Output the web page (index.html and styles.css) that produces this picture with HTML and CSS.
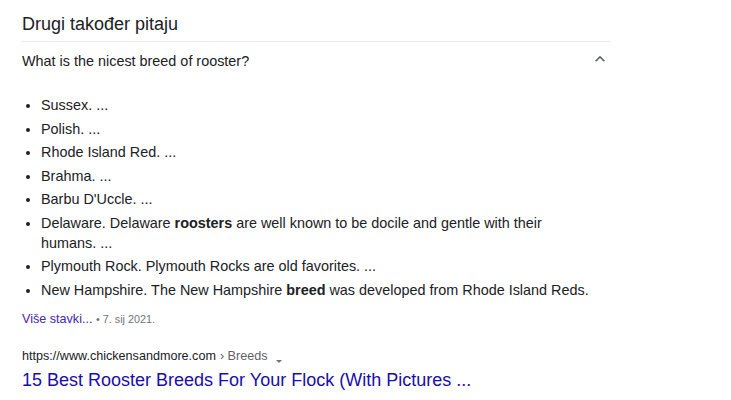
FILE: index.html
```html
<!DOCTYPE html>
<html>
<head>
<meta charset="utf-8">
<link rel="stylesheet" href="styles.css">
</head>
<body>
<div class="wrap">
  <h2 class="heading">Drugi također pitaju</h2>
  <div class="question">
    <span>What is the nicest breed of rooster?</span>
    <svg class="chev" width="20" height="20" viewBox="0 0 24 24"><path d="M7.41 15.41L12 10.83l4.59 4.58L18 14l-6-6-6 6z" fill="#5f6368"/></svg>
  </div>
  <ul class="list">
    <li>Sussex. ...</li>
    <li>Polish. ...</li>
    <li>Rhode Island Red. ...</li>
    <li>Brahma. ...</li>
    <li>Barbu D'Uccle. ...</li>
    <li>Delaware. Delaware <b>roosters</b> are well known to be docile and gentle with their humans. ...</li>
    <li>Plymouth Rock. Plymouth Rocks are old favorites. ...</li>
    <li>New Hampshire. The New Hampshire <b>breed</b> was developed from Rhode Island Reds.</li>
  </ul>
  <div class="more"><a class="more-link">Više stavki...</a> <span class="date">• 7. sij 2021.</span></div>
  <div class="cite">https://www.chickensandmore.com<span class="crumb">› Breeds</span><span class="tri"></span></div>
  <a class="title">15 Best Rooster Breeds For Your Flock (With Pictures ...</a>
</div>
</body>
</html>
```
FILE: styles.css
```css
html, body { margin: 0; padding: 0; background: #fff; }
body { font-family: "Liberation Sans", Arial, sans-serif; color: #202124; }
.wrap { padding-left: 22px; width: 588px; }
.heading {
  margin: 0; padding-top: 12px; padding-bottom: 5px;
  font-size: 18px; font-weight: normal; line-height: 24px;
  border-bottom: 1px solid #ebebeb;
}
.question {
  display: flex; align-items: center; justify-content: space-between;
  height: 38px; font-size: 14.4px; line-height: 20px;
}
.chev { margin-right: 0.5px; margin-bottom: 3.5px; }
.list {
  margin: 15.3px 0 0 0; padding-left: 19px;
  font-size: 14.4px; line-height: 20px; width: 555px;
}
.list li { margin-bottom: 3.5px; }
.list b { font-weight: bold; }
.more { margin-top: 11px; font-size: 12.6px; line-height: 16px; }
.more-link { color: #4527b0; }
.date { color: #70757a; font-size: 10.8px; }
.cite { margin-top: 20.3px; font-size: 12.6px; line-height: 18px; color: #202124; display: flex; align-items: center; }
.crumb { color: #5f6368; margin-left: 4px; }
.tri {
  display: inline-block; width: 0; height: 0; margin-left: 8px; margin-top: 11px;
  border-left: 3px solid transparent; border-right: 3px solid transparent; border-top: 3px solid #70757a;
}
.title { display: block; margin-top: 4.2px; font-size: 18px; line-height: 22px; color: #1a0dab; }
```
